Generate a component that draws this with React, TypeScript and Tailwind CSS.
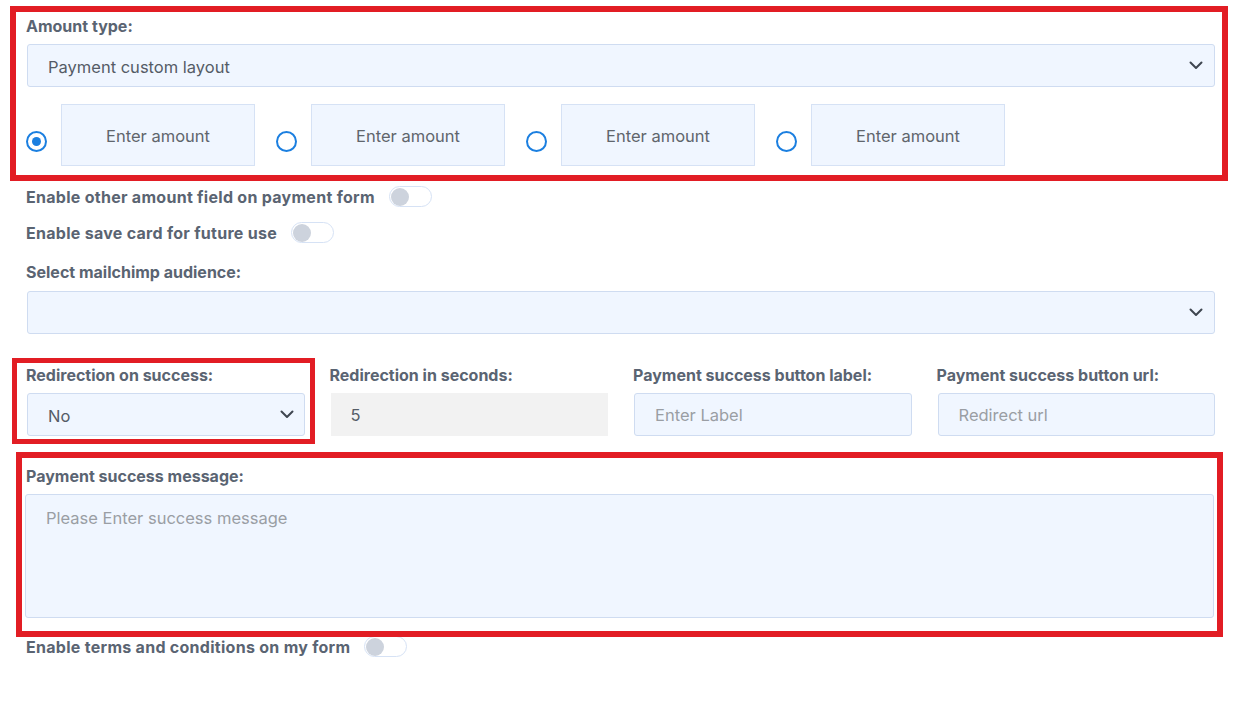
import React from 'react';

const font = { fontFamily: 'Inter, "Noto Sans", sans-serif' };

const Chevron: React.FC = () => (
  <svg width="14" height="9" viewBox="0 0 14 9" fill="none" className="text-[#3f4650]">
    <path d="M1.5 1.5L7 7l5.5-5.5" stroke="currentColor" strokeWidth="2" strokeLinecap="round" strokeLinejoin="round" />
  </svg>
);

const Label: React.FC<{ children: React.ReactNode; wide?: boolean }> = ({ children, wide }) => (
  <div className={`h-5 leading-5 text-base font-bold text-[#5a6472] whitespace-nowrap ${wide ? 'tracking-[0.28px]' : ''}`}>
    {children}
  </div>
);

const Toggle: React.FC = () => (
  <div className="w-[43px] h-[21px] rounded-full border-[1.5px] border-[#d6e2f5] bg-white flex items-center pl-[1px]">
    <div className="w-[18px] h-[18px] rounded-full bg-[#cdd3dd]" />
  </div>
);

const ToggleRow: React.FC<{ label: string; className?: string }> = ({ label, className }) => (
  <div className={`flex items-center gap-[14px] h-[21px] ${className ?? ''}`}>
    <Label wide>{label}</Label>
    <Toggle />
  </div>
);

const SelectBox: React.FC<{ value?: string; chevronPad?: string }> = ({ value, chevronPad = 'pr-[11px]' }) => (
  <div className={`h-[43px] rounded-[3px] border border-[#cfdcf1] bg-[#f0f6ff] flex items-center justify-between pl-5 ${chevronPad}`}>
    <span className="text-[16.5px] text-[#555c66] pt-[3px]">{value}</span>
    <Chevron />
  </div>
);

const Radio: React.FC<{ checked?: boolean }> = ({ checked }) => (
  <div className="w-[21px] h-[21px] rounded-full border-2 border-[#1b7fe0] flex items-center justify-center shrink-0 mb-[14px]">
    {checked && <div className="w-[9px] h-[9px] rounded-full bg-[#1b7fe0]" />}
  </div>
);

const textInput =
  'h-[43px] w-full rounded-[3px] border border-[#cfdcf1] bg-[#f0f6ff] px-5 text-[16.5px] text-[#555c66] placeholder:text-[#9a9ea4] outline-none';

export default function App() {
  return (
    <div className="w-[1242px] h-[712px] bg-white overflow-hidden" style={font}>
      <div className="pl-[26px] pr-[27px] pt-4">
        {/* amount type */}
        <div className="relative">
          <Label>Amount type:</Label>
          <div className="mt-2 ml-px">
            <SelectBox value="Payment custom layout" />
          </div>
          <div className="mt-[17px] flex items-end gap-[21px]">
            {[true, false, false, false].map((checked, i) => (
              <div key={i} className="flex items-end gap-[14px]">
                <Radio checked={checked} />
                <div className="w-[194px] h-[62px] border border-[#d6e2f5] bg-[#f0f6ff] flex items-center justify-center pt-[2px] text-[16.5px] text-[#60656c]">
                  Enter amount
                </div>
              </div>
            ))}
          </div>
          <div className="absolute -top-[10px] -left-[16px] -right-[13px] -bottom-[15px] border-[6px] border-[#e21d24] pointer-events-none" />
        </div>

        <ToggleRow label="Enable other amount field on payment form" className="mt-[20px]" />
        <ToggleRow label="Enable save card for future use" className="mt-[15px]" />

        <div className="mt-[19px]">
          <Label>Select mailchimp audience:</Label>
        </div>
        <div className="mt-[9px] ml-px">
          <SelectBox />
        </div>

        {/* redirection row */}
        <div className="mt-[31px] grid grid-cols-4 gap-x-[25px]">
          <div className="relative">
            <Label>Redirection on success:</Label>
            <div className="mt-2 ml-px">
              <SelectBox value="No" chevronPad="pr-[10px]" />
            </div>
            <div className="absolute -top-[7px] -left-[14px] -right-[10px] -bottom-[8px] border-[5px] border-[#e21d24] pointer-events-none" />
          </div>
          <div>
            <Label>Redirection in seconds:</Label>
            <div className="mt-2 ml-px h-[43px] bg-[#f2f2f2] flex items-center px-5 pt-[2px] text-[16.5px] text-[#555c66]">5</div>
          </div>
          <div>
            <Label>Payment success button label:</Label>
            <div className="mt-2 ml-px">
              <input readOnly placeholder="Enter Label" className={textInput} />
            </div>
          </div>
          <div>
            <Label>Payment success button url:</Label>
            <div className="mt-2 ml-px">
              <input readOnly placeholder="Redirect url" className={textInput} />
            </div>
          </div>
        </div>

        {/* success message */}
        <div className="relative mt-[30px]">
          <Label>Payment success message:</Label>
          <textarea
            readOnly
            placeholder="Please Enter success message"
            className="mt-2 -ml-px block w-[1189px] h-[124px] resize-none rounded-[3px] border border-[#cfdcf1] bg-[#f0f6ff] px-5 pt-[11px] text-[16.5px] text-[#555c66] placeholder:text-[#9a9ea4] outline-none"
          />
          <div className="absolute -top-[14px] -left-[10px] -right-[8px] -bottom-[19px] border-[6px] border-[#e21d24] pointer-events-none" />
        </div>

        <ToggleRow label="Enable terms and conditions on my form" className="mt-[18px]" />
      </div>
    </div>
  );
}
